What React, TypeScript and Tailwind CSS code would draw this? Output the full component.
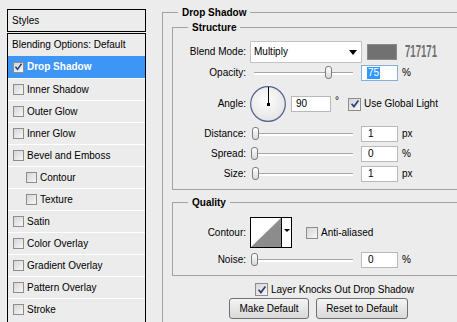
import React from "react";

function Check({ checked = false, size = "w-[12px] h-[12px]" }: { checked?: boolean; size?: string }) {
  return (
    <span
      className={
        "shrink-0 flex items-center justify-center border border-[#8d8d8d] bg-gradient-to-br from-[#d6d6d6] to-[#f7f7f7] " +
        size
      }
    >
      {checked && (
        <svg width="10" height="10" viewBox="0 0 10 10">
          <path d="M1.6 4.8 L3.9 7.6 L8.4 1.4" fill="none" stroke="#2b3f78" strokeWidth="1.7" />
        </svg>
      )}
    </span>
  );
}

function Slider({ left }: { left: number }) {
  return (
    <div className="relative w-[104px] h-[16px] shrink-0">
      <div className="absolute left-[4px] top-[7px] w-[99px] h-[3px] border-t border-[#a6a6a6] bg-white" />
      <div
        className="absolute top-[1px] w-[7px] h-[13px] rounded-[3px] border border-[#7d7d7d] bg-gradient-to-b from-white to-[#d8d8d8]"
        style={{ left }}
      />
    </div>
  );
}

function NumInput({ value, focused = false }: { value: string; focused?: boolean }) {
  return (
    <div
      className={
        "ml-[7px] w-[37px] h-[16px] shrink-0 bg-white border flex items-center pl-[6px] " +
        (focused ? "border-[#86afd9]" : "border-[#b9b9b9]")
      }
    >
      {focused ? <span className="bg-[#3399ff] text-white px-px -ml-px">{value}</span> : value}
    </div>
  );
}

function SliderRow({ label, left, value, unit, focused = false, mt = "mt-[4px]" }: { label: string; left: number; value: string; unit: string; focused?: boolean; mt?: string }) {
  return (
    <div className={"flex items-center h-[16px] " + mt}>
      <div className="w-[73px] text-right shrink-0">{label}</div>
      <div className="ml-[4px] flex items-center">
        <Slider left={left} />
        <NumInput value={value} focused={focused} />
        <span className="ml-[4px]">{unit}</span>
      </div>
    </div>
  );
}

const rows: { name: string; indent?: boolean; selected?: boolean; checked?: boolean }[] = [
  { name: "Drop Shadow", selected: true, checked: true },
  { name: "Inner Shadow" },
  { name: "Outer Glow" },
  { name: "Inner Glow" },
  { name: "Bevel and Emboss" },
  { name: "Contour", indent: true },
  { name: "Texture", indent: true },
  { name: "Satin" },
  { name: "Color Overlay" },
  { name: "Gradient Overlay" },
  { name: "Pattern Overlay" },
  { name: "Stroke" },
];

export default function App() {
  return (
    <div className="w-[457px] h-[322px] overflow-hidden bg-[#ececec] flex text-[10px] leading-[12px] text-black font-['Liberation_Sans',Arial,sans-serif]">
      {/* Left styles list */}
      <div className="ml-[7px] mt-[9px] w-[139px] shrink-0 flex flex-col">
        <div className="h-[23px] border border-black flex items-center pl-[4px]">Styles</div>
        <div className="mt-px border border-black border-b-0 flex-1">
          <div className="h-[22px] flex items-center pl-[4px]">Blending Options: Default</div>
          {rows.map((r) =>
            r.selected ? (
              <div key={r.name} className="h-[22px] bg-[#3d95f6] flex items-center pl-[5px] text-white font-bold">
                <Check checked size="w-[11px] h-[11px]" />
                <span className="ml-[3px]">{r.name}</span>
              </div>
            ) : (
              <div
                key={r.name}
                className={
                  "h-[22px] border-t border-white flex items-center " + (r.indent ? "pl-[18px]" : "pl-[5px]")
                }
              >
                <Check checked={r.checked} size="w-[11px] h-[11px]" />
                <span className="ml-[3px]">{r.name}</span>
              </div>
            )
          )}
        </div>
      </div>

      {/* Right options */}
      <div className="ml-[16px] w-[330px] shrink-0">
        <fieldset className="mt-[6px] border-l border-t border-[#a3a3a3] pl-[9px] pr-[10px] w-[320px] h-[340px]">
          <legend className="ml-[6px] px-[4px] font-bold leading-[13px]">Drop Shadow</legend>

          {/* Structure */}
          <fieldset className="mt-[2px] border border-[#a3a3a3] pb-[7px]">
            <legend className="ml-[15px] px-[4px] font-bold leading-[13px]">Structure</legend>

            <div className="flex items-center h-[22px] mt-[7px]">
              <div className="w-[73px] text-right shrink-0">Blend Mode:</div>
              <div className="ml-[4px] w-[112px] h-[22px] bg-white border border-[#c4c4c4] flex items-center justify-between pl-[3px] pr-[4px]">
                <span>Multiply</span>
                <svg width="8" height="5" viewBox="0 0 8 5">
                  <path d="M0 0 H8 L4 5 Z" fill="#000" />
                </svg>
              </div>
              <div className="ml-[5px] w-[30px] h-[16px] bg-[#717171] border border-[#8a8a8a]" />
              <span className="ml-[8px] font-bold text-[16px] leading-[16px] text-[#6f6f6f] origin-left scale-x-[0.6] inline-block">
                717171
              </span>
            </div>

            <SliderRow label="Opacity:" left={75} value="75" unit="%" focused mt="mt-[2px]" />

            <div className="flex items-center h-[36px] mt-[5px]">
              <div className="w-[73px] text-right shrink-0">Angle:</div>
              <div className="ml-[4px] flex items-center">
                <svg width="36" height="36" viewBox="0 0 36 36" className="shrink-0">
                  <defs>
                    <radialGradient id="dialg" cx="45%" cy="40%" r="65%">
                      <stop offset="0" stopColor="#ffffff" />
                      <stop offset="1" stopColor="#e2e2e2" />
                    </radialGradient>
                  </defs>
                  <circle cx="18" cy="18" r="17.3" fill="url(#dialg)" stroke="#52618e" strokeWidth="1.2" />
                  <line x1="18.5" y1="1" x2="18.5" y2="18" stroke="#000" strokeWidth="1" />
                  <rect x="17" y="17" width="3" height="3" fill="#000" />
                </svg>
                <div className="ml-[5px] w-[40px] h-[16px] bg-white border border-[#b9b9b9] flex items-center pl-[4px]">90</div>
                <span className="ml-[4px] w-[13px] shrink-0 -mt-[6px]">°</span>
                <Check checked size="w-[13px] h-[13px]" />
                <span className="ml-[3px]">Use Global Light</span>
              </div>
            </div>

            <SliderRow label="Distance:" left={2} value="1" unit="px" />
            <SliderRow label="Spread:" left={1} value="0" unit="%" />
            <SliderRow label="Size:" left={2} value="1" unit="px" />
          </fieldset>

          {/* Quality */}
          <fieldset className="mt-[6px] border border-[#a3a3a3] pb-[7px]">
            <legend className="ml-[15px] px-[4px] font-bold leading-[13px]">Quality</legend>

            <div className="flex items-center h-[31px] mt-[8px]">
              <div className="w-[73px] text-right shrink-0">Contour:</div>
              <div className="ml-[4px] w-[42px] h-[31px] border border-black bg-white flex shrink-0">
                <svg width="30" height="29" viewBox="0 0 30 29" className="shrink-0">
                  <path d="M0 29 L30 0 L30 29 Z" fill="#8c8c8c" />
                </svg>
                <div className="flex-1 border-l border-black flex items-center justify-center pb-[4px]">
                  <svg width="6" height="3" viewBox="0 0 6 3">
                    <path d="M0 0 H6 L3 3 Z" fill="#000" />
                  </svg>
                </div>
              </div>
              <span className="ml-[14px]">
                <Check size="w-[12px] h-[12px]" />
              </span>
              <span className="ml-[3px]">Anti-aliased</span>
            </div>

            <SliderRow label="Noise:" left={1} value="0" unit="%" />
          </fieldset>

          <div className="flex items-center h-[13px] mt-[7px] pl-[83px]">
            <Check checked size="w-[13px] h-[13px]" />
            <span className="ml-[3px]">Layer Knocks Out Drop Shadow</span>
          </div>

          <div className="flex mt-[2px] pl-[57px] gap-[7px]">
            <button className="w-[80px] h-[21px] rounded-[3px] border border-[#707070] bg-gradient-to-b from-[#f4f4f4] to-[#d9d9d9] flex items-center justify-center">
              Make Default
            </button>
            <button className="w-[92px] h-[21px] rounded-[3px] border border-[#707070] bg-gradient-to-b from-[#f4f4f4] to-[#d9d9d9] flex items-center justify-center">
              Reset to Default
            </button>
          </div>
        </fieldset>
      </div>
    </div>
  );
}
